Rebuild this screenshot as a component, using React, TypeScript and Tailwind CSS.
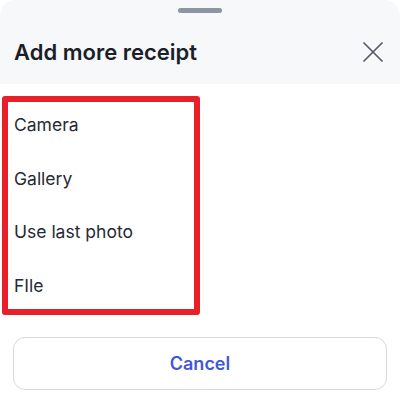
import React from 'react';

const options = ['Camera', 'Gallery', 'Use last photo', 'FIle'];

const CloseIcon = () => (
  <svg width="20" height="20" viewBox="0 0 20 20" fill="none" stroke="#545b68" strokeWidth="1.7" strokeLinecap="round">
    <path d="M1 1L19 19M19 1L1 19" />
  </svg>
);

export default function App() {
  return (
    <div className="w-[400px] h-[404px] bg-white overflow-hidden" style={{ fontFamily: 'Inter, "Noto Sans", sans-serif' }}>
      {/* Sheet header */}
      <div className="h-[84px] bg-[#f7f8fa] rounded-t-[16px] flex flex-col">
        <div className="mt-2 self-center w-[44px] h-[5px] rounded-full bg-[#8d95a3]" />
        <div className="mt-[25px] pl-[14px] pr-[17px] h-[28px] flex items-center justify-between">
          <h2 className="text-[22px] leading-[28px] font-semibold text-[#1b1f29]">Add more receipt</h2>
          <button className="w-5 h-5 flex items-center justify-center">
            <CloseIcon />
          </button>
        </div>
      </div>

      {/* Options (highlighted) */}
      <div className="mt-3 ml-[2px] w-[198px] h-[219px] border-[6px] border-[#e8202a] rounded-[3px] pl-[6px] pt-[11px] flex flex-col gap-[29.5px]">
        {options.map((opt) => (
          <div key={opt} className="text-[17.5px] leading-6 text-[#252a35]">
            {opt}
          </div>
        ))}
      </div>

      {/* Cancel */}
      <div className="px-[13px] mt-[22px]">
        <button className="w-full h-[53px] rounded-[12px] border border-[#d6dae1] bg-white text-[18px] font-semibold text-[#4158d8]">
          Cancel
        </button>
      </div>
    </div>
  );
}
